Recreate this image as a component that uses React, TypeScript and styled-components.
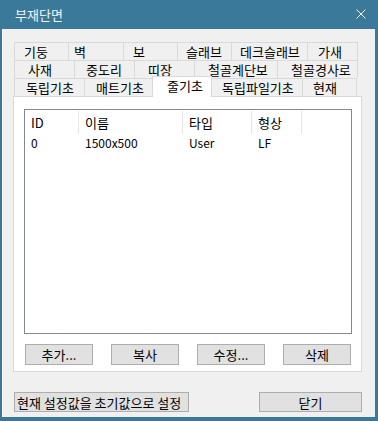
import React from 'react';
import styled, { createGlobalStyle } from 'styled-components';

const GlobalStyle = createGlobalStyle`
  body {
    margin: 0;
    background: #fff;
    font-family: "Noto Sans CJK KR", "Noto Sans", sans-serif;
  }
`;

const tabRows = [
  [
    { label: '기둥', width: 54, pad: 9 },
    { label: '벽', width: 55, pad: 5 },
    { label: '보', width: 54, pad: 9 },
    { label: '슬래브', width: 54, pad: 8 },
    { label: '데크슬래브', width: 76, pad: 8 },
    { label: '가새', width: 51, pad: 10 },
  ],
  [
    { label: '사재', width: 60, pad: 13 },
    { label: '중도리', width: 60, pad: 11 },
    { label: '띠장', width: 60, pad: 13 },
    { label: '철골계단보', width: 83, pad: 13 },
    { label: '철골경사로', width: 81, pad: 13 },
  ],
  [
    { label: '독립기초', width: 70, pad: 11 },
    { label: '매트기초', width: 68, pad: 11 },
    { label: '줄기초', width: 60, pad: 14, active: true },
    { label: '독립파일기초', width: 91, pad: 10 },
    { label: '현재', width: 55, pad: 10 },
  ],
];

const columns = [
  { key: 'id', title: 'ID', width: 54 },
  { key: 'name', title: '이름', width: 104 },
  { key: 'type', title: '타입', width: 69 },
  { key: 'shape', title: '형상', width: 50 },
];

const rows = [{ id: '0', name: '1500x500', type: 'User', shape: 'LF' }];

const Window = styled.div`
  width: 378px;
  height: 421px;
  box-sizing: border-box;
  background: #3a7999;
  padding: 0 3px 4px 2px;
  display: flex;
  flex-direction: column;
  font-size: 13px;
  color: #000;
`;

const TitleBar = styled.div`
  height: 28px;
  display: flex;
  align-items: center;
  justify-content: space-between;
  padding: 0 9px 1px 13px;
  color: #f4f7f9;
  font-size: 13px;
`;

const CloseIcon = styled.svg`
  display: block;
`;

const Client = styled.div`
  flex: 1;
  background: #f0f0f0;
  border-left: 1px solid #fff;
  padding: 13px 0 0 10px;
`;

const TabArea = styled.div`
  width: 349px;
`;

const TabRow = styled.div`
  display: flex;
  height: 18px;
  margin-left: 1px;
`;

const Tab = styled.div<{ $width: number; $pad: number; $active?: boolean; $last?: boolean }>`
  box-sizing: border-box;
  width: ${(p) => p.$width}px;
  height: ${(p) => (p.$active ? 21 : 18)}px;
  margin-top: ${(p) => (p.$active ? -2 : 0)}px;
  padding-left: ${(p) => p.$pad}px;
  display: flex;
  align-items: center;
  background: ${(p) => (p.$active ? '#fff' : '#f0f0f0')};
  border-top: 1px solid #d9d9d9;
  border-left: 1px solid #d9d9d9;
  border-right: ${(p) => (p.$last || p.$active ? '1px solid #d9d9d9' : 'none')};
  margin-right: ${(p) => (p.$active ? -1 : 0)}px;
  position: ${(p) => (p.$active ? 'relative' : 'static')};
  z-index: ${(p) => (p.$active ? 2 : 0)};
  white-space: nowrap;
  line-height: 1;
  padding-bottom: ${(p) => (p.$active ? 3 : 1)}px;
`;

const Panel = styled.div`
  position: relative;
  z-index: 1;
  box-sizing: border-box;
  width: 349px;
  height: 276px;
  background: #fff;
  border: 1px solid #d9d9d9;
  padding: 12px 9px 0 10px;
  display: flex;
  flex-direction: column;
`;

const ListView = styled.div`
  box-sizing: border-box;
  height: 225px;
  border: 1px solid #828790;
  background: #fff;
`;

const HeaderRow = styled.div`
  display: flex;
  height: 23px;
  margin-top: 1px;
`;

const HeaderCell = styled.div<{ $width: number }>`
  box-sizing: border-box;
  width: ${(p) => p.$width}px;
  padding-left: 6px;
  border-right: 1px solid #e5e5e5;
  display: flex;
  align-items: center;
  line-height: 1;
`;

const DataRow = styled.div`
  display: flex;
  height: 18px;
`;

const DataCell = styled.div<{ $width: number }>`
  box-sizing: border-box;
  width: ${(p) => p.$width}px;
  padding-left: 6px;
  display: flex;
  align-items: center;
  font-size: 12px;
  line-height: 1;
`;

const ButtonRow = styled.div`
  display: flex;
  justify-content: space-between;
  padding: 0 1px;
  margin-top: 10px;
`;

const Button = styled.button<{ $width: number; $height?: number }>`
  box-sizing: border-box;
  width: ${(p) => p.$width}px;
  height: ${(p) => p.$height ?? 21}px;
  padding: 0;
  background: #e1e1e1;
  border: 1px solid #adadad;
  border-radius: 0;
  font-family: inherit;
  font-size: 13px;
  color: #000;
  line-height: 1;
  white-space: nowrap;
`;

const Footer = styled.div`
  width: 349px;
  box-sizing: border-box;
  display: flex;
  justify-content: space-between;
  padding-left: 1px;
  margin-top: 20px;
`;

const WideButton = styled(Button)`
  text-align: left;
  padding-left: 2px;
  overflow: hidden;
`;

const App: React.FC = () => {
  return (
    <>
      <GlobalStyle />
      <Window>
        <TitleBar>
          <span>부재단면</span>
          <CloseIcon width="10" height="10" viewBox="0 0 10 10">
            <path d="M0.5 0.5 L9.5 9.5 M9.5 0.5 L0.5 9.5" stroke="#f4f7f9" strokeWidth="1" />
          </CloseIcon>
        </TitleBar>
        <Client>
          <TabArea>
            {tabRows.map((row, ri) => (
              <TabRow key={ri}>
                {row.map((tab, ti) => (
                  <Tab
                    key={tab.label}
                    $width={tab.width}
                    $pad={tab.pad}
                    $active={'active' in tab ? tab.active : false}
                    $last={ti === row.length - 1}
                  >
                    {tab.label}
                  </Tab>
                ))}
              </TabRow>
            ))}
            <Panel>
              <ListView>
                <HeaderRow>
                  {columns.map((c) => (
                    <HeaderCell key={c.key} $width={c.width}>{c.title}</HeaderCell>
                  ))}
                </HeaderRow>
                {rows.map((r) => (
                  <DataRow key={r.id}>
                    {columns.map((c) => (
                      <DataCell key={c.key} $width={c.width}>
                        {r[c.key as keyof typeof r]}
                      </DataCell>
                    ))}
                  </DataRow>
                ))}
              </ListView>
              <ButtonRow>
                <Button $width={68}>추가...</Button>
                <Button $width={68}>복사</Button>
                <Button $width={68}>수정...</Button>
                <Button $width={68}>삭제</Button>
              </ButtonRow>
            </Panel>
          </TabArea>
          <Footer>
            <WideButton $width={175} $height={20}>현재 설정값을 초기값으로 설정</WideButton>
            <Button $width={103} $height={20}>닫기</Button>
          </Footer>
        </Client>
      </Window>
    </>
  );
};

export default App;
